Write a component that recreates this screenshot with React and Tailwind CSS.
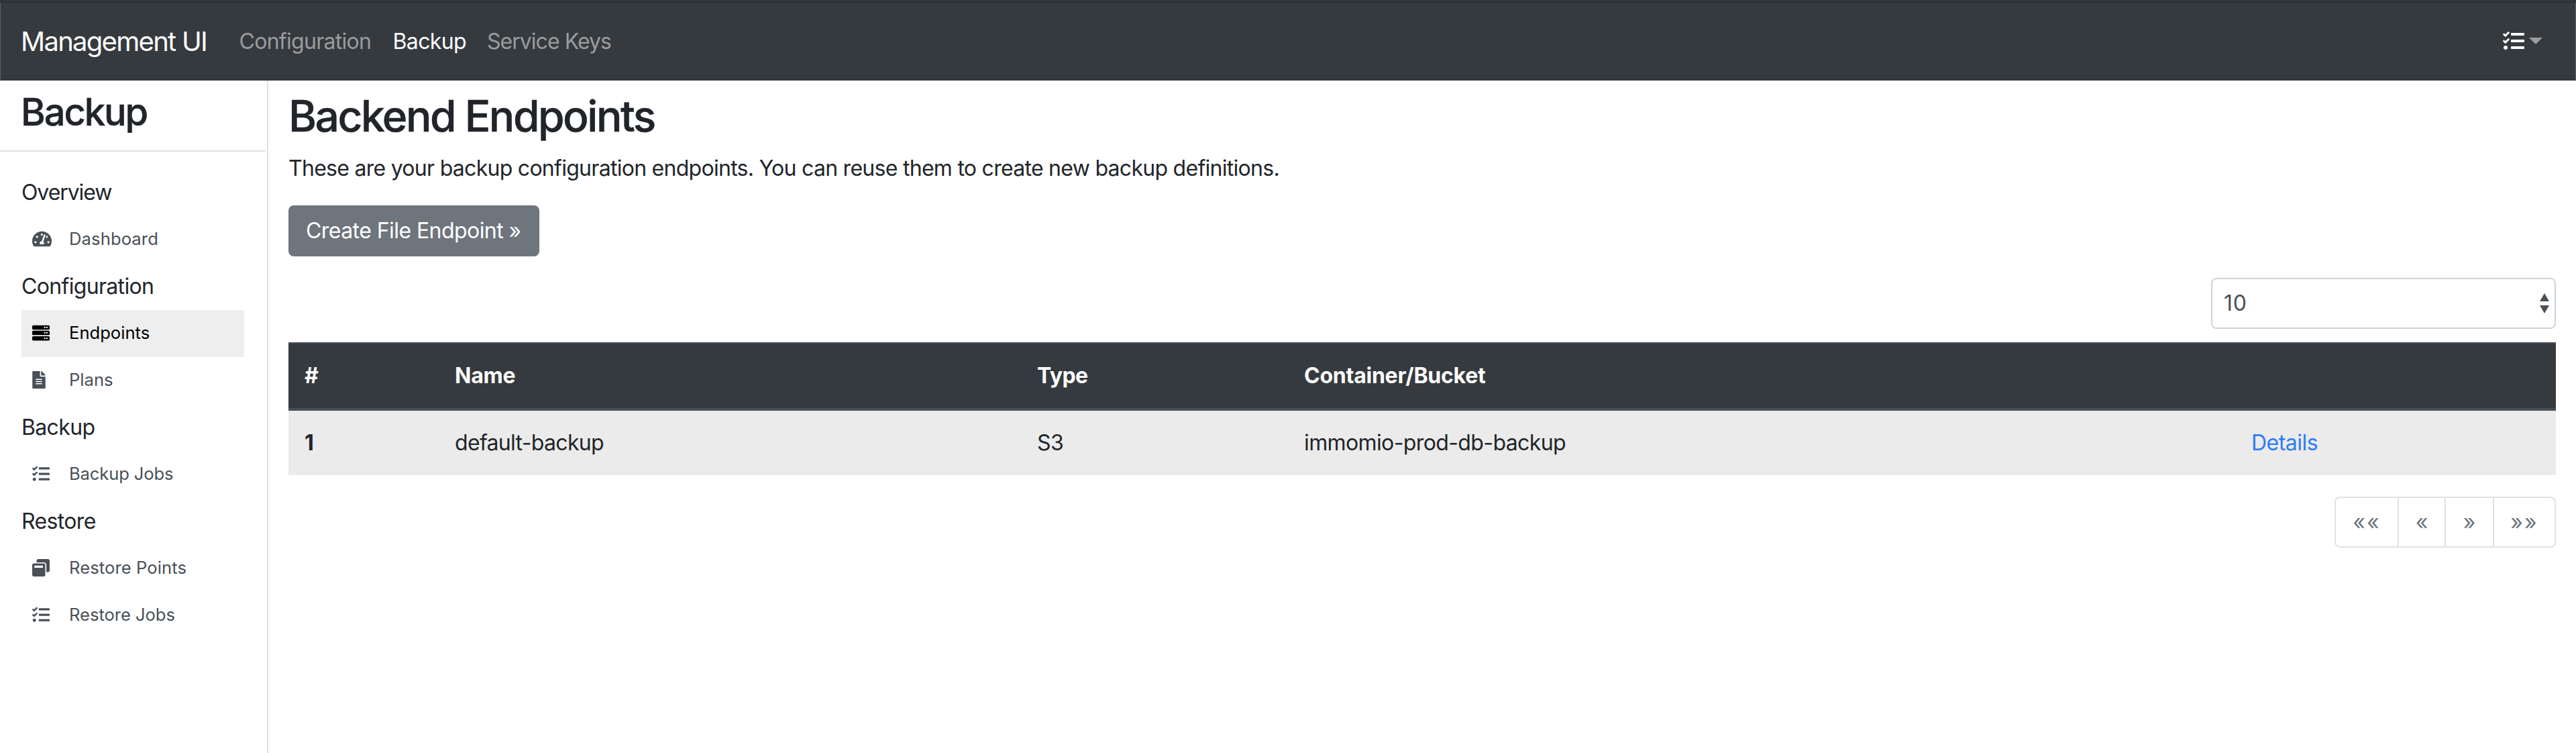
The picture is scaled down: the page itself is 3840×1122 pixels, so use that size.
import { FaTachometerAlt, FaServer, FaFileAlt, FaTasks, FaWindowRestore } from "react-icons/fa";

const navLinks = [
  { label: "Configuration", style: "tracking-[-0.711px] text-[#9a9c9e]", width: "w-[229px]" },
  { label: "Backup", style: "tracking-[-0.634px] text-white", width: "w-[140.5px]" },
  { label: "Service Keys", style: "tracking-[-0.969px] text-[#9a9c9e]", width: "w-[200px]" },
];

function SidebarHeading({ children, tracking }) {
  return (
    <h6 className={"flex h-[70px] items-center text-[32px] leading-[48px] font-normal text-[#212529] " + tracking}>
      {children}
    </h6>
  );
}

function SidebarLink({ icon: Icon, size = "h-[26px] w-[26px]", label, active = false, tracking = "" }) {
  return (
    <a
      className={
        "flex h-[70px] items-center pb-0.5 pl-4 text-[25.6px] leading-[38px] " +
        (active ? "bg-[#eeeeee] text-black " : "text-[#495057] ") +
        tracking
      }
    >
      <span className="flex w-[55px] items-center">
        <Icon className={size} />
      </span>
      {label}
    </a>
  );
}

function Navbar() {
  return (
    <header className="flex h-[120px] shrink-0 flex-col border-b border-[#2d3135] bg-[#353a3e]">
      <div className="h-1 shrink-0 border-b border-[#26292c] bg-[#33373b]" />
      <nav className="flex h-[116px] items-center border-x border-[#5b6064] pl-[30px]">
        <a className="w-[325.5px] text-[40px] leading-[60px] tracking-[-1.719px] text-white">Management UI</a>
        {navLinks.map((link) => (
          <a key={link.label} className={"text-[32px] leading-[48px] whitespace-nowrap " + link.style + " " + link.width}>
            {link.label}
          </a>
        ))}
        <div className="mr-[49px] ml-auto flex items-center gap-[7px] pb-px">
          <FaTasks className="h-8 w-8 text-white" />
          <svg className="mb-px h-[10px] w-5 text-[#9a9c9e]" viewBox="0 0 20 10">
            <path d="M0 0h20L10 10z" fill="currentColor" />
          </svg>
        </div>
      </nav>
    </header>
  );
}

function Sidebar() {
  return (
    <aside className="w-[400px] shrink-0 border-r-2 border-[#dee2e6]">
      <h2 className="h-[104px] pt-[13px] pl-[31px] text-[56px] leading-[68px] font-medium tracking-[-2.079px] [-webkit-text-stroke:0.5px_#212529]">
        Backup
      </h2>
      <div className="mr-[2px] h-[2px] bg-[#dee2e6]" />
      <nav className="mt-[26px] mr-[34px] ml-8">
        <SidebarHeading tracking="tracking-[-1.1px]">Overview</SidebarHeading>
        <SidebarLink icon={FaTachometerAlt} size="h-[26px] w-[29px]" label="Dashboard" tracking="tracking-[0.1px]" />
        <SidebarHeading tracking="tracking-[-0.669px]">Configuration</SidebarHeading>
        <SidebarLink icon={FaServer} label="Endpoints" active />
        <SidebarLink icon={FaFileAlt} size="h-[26px] w-5" label="Plans" />
        <SidebarHeading tracking="tracking-[-0.65px]">Backup</SidebarHeading>
        <SidebarLink icon={FaTasks} label="Backup Jobs" tracking="tracking-[-0.141px]" />
        <SidebarHeading tracking="tracking-[-0.65px]">Restore</SidebarHeading>
        <SidebarLink icon={FaWindowRestore} label="Restore Points" tracking="tracking-[0.09px]" />
        <SidebarLink icon={FaTasks} label="Restore Jobs" tracking="tracking-[-0.041px]" />
      </nav>
    </aside>
  );
}

function EndpointsTable() {
  return (
    <table className="mt-5 w-full table-fixed border-separate border-spacing-0 text-left whitespace-nowrap">
      <colgroup>
        <col className="w-[224px]" />
        <col className="w-[868px]" />
        <col className="w-[398px]" />
        <col className="w-[1412px]" />
        <col />
      </colgroup>
      <thead className="bg-[#353a3e] text-white">
        <tr className="[&>th]:h-[102px] [&>th]:border-t-2 [&>th]:border-b-4 [&>th]:border-[#484e56] [&>th]:py-0 [&>th]:pl-6 [&>th]:font-bold">
          <th>#</th>
          <th className="tracking-[-0.257px]">Name</th>
          <th className="tracking-[-0.599px]">Type</th>
          <th className="tracking-[-0.242px]">Container/Bucket</th>
          <th />
        </tr>
      </thead>
      <tbody className="bg-[#ebebeb]">
        <tr className="[&>td]:h-24 [&>td]:py-0 [&>td]:pl-6">
          <td className="font-bold">1</td>
          <td className="tracking-[-0.685px]">default-backup</td>
          <td className="tracking-[-0.531px]">S3</td>
          <td className="tracking-[-0.612px]">immomio-prod-db-backup</td>
          <td className="tracking-[-0.507px] text-[#2e7cf6]">Details</td>
        </tr>
      </tbody>
    </table>
  );
}

function Pagination() {
  return (
    <div className="mt-8 ml-auto flex h-[76px] w-[330px] divide-x-2 divide-[#dee2e6] rounded-lg border-2 border-[#dee2e6] text-[#6c757d] [&>button]:pb-px">
      <button className="w-[94px] tracking-[2.06px]">««</button>
      <button className="w-[70px]">«</button>
      <button className="w-[72px]">»</button>
      <button className="flex-1 tracking-[2.06px]">»»</button>
    </div>
  );
}

export default function App() {
  return (
    <div className="flex h-[1122px] flex-col overflow-hidden bg-white font-['Inter',sans-serif] text-[32px] leading-[48px] text-[#212529]">
      <Navbar />
      <div className="flex flex-1">
        <Sidebar />
        <main className="flex-1 px-[30px]">
          <h1 className="pt-[15px] text-[64px] leading-[76px] font-medium tracking-[-2.456px] [-webkit-text-stroke:0.5px_#212529]">
            Backend Endpoints
          </h1>
          <p className="mt-4 tracking-[-0.72px]">
            These are your backup configuration endpoints. You can reuse them to create new backup definitions.
          </p>
          <button className="mt-[31px] flex h-[76px] w-[374px] items-center rounded-lg bg-[#6e757c] pl-[26px] tracking-[-0.563px] text-white">
            Create File Endpoint »
          </button>
          <div className="mt-8 ml-auto flex h-[76px] w-[514px] items-center justify-between rounded-lg border-2 border-[#ced4da] pr-2 pl-[17px] text-[#495057]">
            <span className="tracking-[0.68px]">10</span>
            <svg className="h-[30px] w-[14px]" viewBox="0 0 14 30">
              <path d="M7 0l7 12H0zM7 30l7-12H0z" fill="currentColor" />
            </svg>
          </div>
          <EndpointsTable />
          <Pagination />
        </main>
      </div>
    </div>
  );
}
